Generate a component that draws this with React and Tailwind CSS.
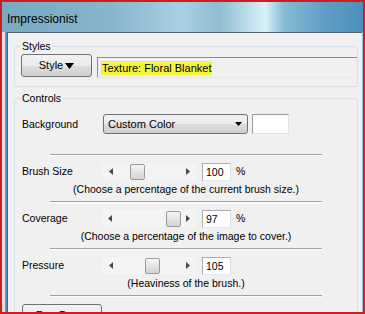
import React from 'react'

function ArrowLeft() {
  return (
    <svg width="4" height="7" viewBox="0 0 4 7">
      <polygon points="4,0 0,3.5 4,7" fill="#4a4a4a" />
    </svg>
  )
}

function ArrowRight() {
  return (
    <svg width="4" height="7" viewBox="0 0 4 7">
      <polygon points="0,0 4,3.5 0,7" fill="#4a4a4a" />
    </svg>
  )
}

function Slider({ thumb }) {
  return (
    <div className="flex h-[17px] w-[94px] bg-[#f4f4f4]">
      <div className="w-[17px] flex items-center justify-center">
        <ArrowLeft />
      </div>
      <div className="flex-1 flex items-center">
        <div className={`${thumb} w-[15px] h-[16px] rounded-[2px] border border-[#9a9a9a] bg-[linear-gradient(180deg,#f6f6f6,#e2e2e2_55%,#d4d4d4)]`} />
      </div>
      <div className="w-[17px] flex items-center justify-center">
        <ArrowRight />
      </div>
    </div>
  )
}

function Separator() {
  return <div className="ml-[29px] w-[272px] h-[2px] border-t border-[#a0a0a0] border-b border-b-white" />
}

function SliderBlock({ label, thumb, value, percent, desc }) {
  return (
    <div>
      <Separator />
      <div className="mt-[7px] h-[17px] flex items-center">
        <div className="w-[81px] pl-[1px]">{label}</div>
        <Slider thumb={thumb} />
        <div className="ml-[6px] w-[29px] h-[18px] bg-white border border-[#abadb3] border-b-[#e3e9ef] border-r-[#dbdfe6] pl-[3px] leading-[16px]">
          {value}
        </div>
        {percent && <div className="ml-[5px]">%</div>}
      </div>
      <div className="mt-[3px] mb-[5px] ml-[29px] w-[272px] h-[13px] leading-[13px] text-center whitespace-nowrap">
        {desc}
      </div>
    </div>
  )
}

export default function App() {
  return (
    <div className="w-[365px] h-[314px] overflow-hidden border-2 border-[#c9201d] flex flex-col font-['Liberation_Sans',Arial,sans-serif] text-black bg-[#f0f0f0]">
      <div className="h-[30px] flex-shrink-0 flex items-center pl-[5px] pt-[3px] text-[12px] text-black bg-[linear-gradient(90deg,#79aac4_0%,#86b5cc_30%,#a9d0e2_50%,#8fbdd2_60%,#d9f0f8_73%,#86bcd6_78%,#5e9cc4_90%,#4d8fbd_100%)]">
        Impressionist
      </div>

      <div className="flex flex-1 min-h-0">
        <div className="w-[5px] flex-shrink-0 bg-[linear-gradient(90deg,#e4dde2_0%,#e4dde2_50%,#5d97c4_60%,#5d97c4_100%)]" />

        <div className="flex-1 border-l border-t border-[#4f5f6b] bg-[#f0f0f0] text-[10.5px] leading-[13px]">
          <fieldset className="mt-[7px] ml-[6px] mr-[4px] border border-[#d5dfe5] rounded-[3px] pl-[6px] pb-[8px]">
            <legend className="px-[1px] h-[13px] leading-[13px]">Styles</legend>
            <div className="mt-[1px] flex items-start gap-[5px]">
              <div className="w-[71px] h-[23px] flex items-center justify-center gap-[2px] rounded-[3px] border border-[#707070] bg-[linear-gradient(180deg,#f2f2f2_0%,#ebebeb_50%,#dddddd_51%,#cfcfcf_100%)] text-[11px]">
                <span>Style</span>
                <svg width="9" height="6" viewBox="0 0 9 6">
                  <polygon points="0,0 9,0 4.5,6" fill="#000" />
                </svg>
              </div>
              <div className="mt-[3px] flex-1 h-[21px] border border-[#8c8c8c] border-b-[#e3e9ef] border-r-0 bg-[#f0f0f0] flex items-center pl-[3px] text-[11px]">
                <span className="bg-[#f4f43a] px-[1px] h-[14px] leading-[14px]">Texture: Floral Blanket</span>
              </div>
            </div>
          </fieldset>

          <fieldset className="mt-[5px] ml-[6px] mr-[4px] border border-[#d5dfe5] rounded-[3px] pl-[6px]">
            <legend className="px-[1px] h-[13px] leading-[13px]">Controls</legend>
            <div className="mt-[9px] h-[20px] flex items-center">
              <div className="w-[82px] pl-[1px]">Background</div>
              <div className="w-[145px] h-[20px] rounded-[3px] border border-[#707070] bg-[linear-gradient(180deg,#f2f2f2_0%,#ebebeb_50%,#dddddd_51%,#cfcfcf_100%)] flex items-center justify-between pl-[4px] pr-[5px] text-[11px]">
                <span>Custom Color</span>
                <svg width="7" height="4" viewBox="0 0 7 4">
                  <polygon points="0,0 7,0 3.5,4" fill="#000" />
                </svg>
              </div>
              <div className="ml-[4px] w-[37px] h-[20px] bg-white border border-[#9c9c9c] border-b-[#e3e3e3] border-r-[#e3e3e3]" />
            </div>
            <div className="mt-[20px]">
              <SliderBlock
                label="Brush Size"
                thumb="ml-[11px]"
                value="100"
                percent
                desc="(Choose a percentage of the current brush size.)"
              />
              <SliderBlock
                label="Coverage"
                thumb="ml-[48px]"
                value="97"
                percent
                desc="(Choose a percentage of the image to cover.)"
              />
              <SliderBlock
                label="Pressure"
                thumb="ml-[26px]"
                value="105"
                desc="(Heaviness of the brush.)"
              />
              <Separator />
              <div className="mt-[7px] ml-[1px] w-[80px] h-[23px] rounded-[3px] border border-[#707070] bg-[linear-gradient(180deg,#f2f2f2_0%,#ebebeb_50%,#dddddd_51%,#cfcfcf_100%)] flex justify-center pt-[4px] text-[11px]">
                Run Demo
              </div>
            </div>
          </fieldset>
        </div>

        <div className="w-[1px] flex-shrink-0 bg-[#9cc6dc]" />
      </div>
    </div>
  )
}
